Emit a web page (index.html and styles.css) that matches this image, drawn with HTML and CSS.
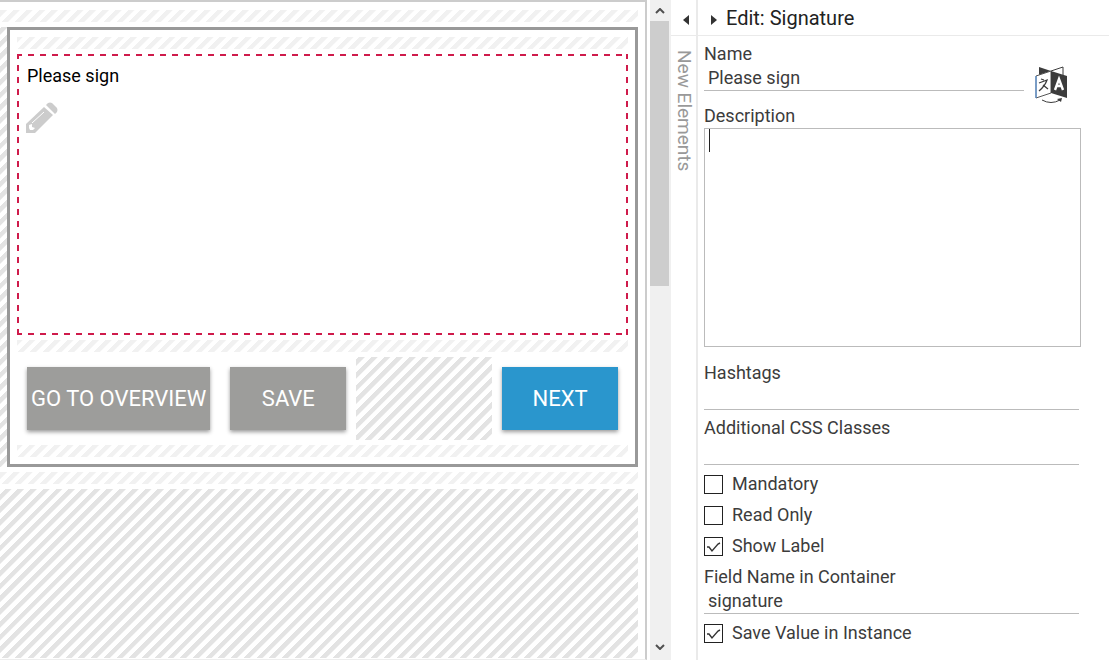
FILE: index.html
```
<!DOCTYPE html>
<html lang="en">
<head>
    <meta charset="UTF-8">
    <meta name="viewport" content="width=device-width, initial-scale=1.0">
    <title>Form Editor</title>
    <link rel="stylesheet" href="styles.css">
</head>
<body>
    <div class="editor">
        <main class="canvas">
            <div class="drop-line"></div>
            <div class="canvas-row">
                <div class="drop-side"></div>
                <section class="container">
                    <div class="drop-line"></div>
                    <div class="element selected">
                        <div class="element-label">Please sign</div>
                        <svg class="pencil" width="32" height="32" viewBox="0 0 32 32">
                            <path fill="#ccc" d="M0 31V22L18 5L27 13L9 31Z"/>
                            <path fill="#ccc" d="M20 3L22 1Q24 0 26 1L31 6Q32 8 31 10L29 12Z"/>
                            <path stroke="#fff" stroke-width="1" fill="none" d="M6 21L18 10"/>
                            <path fill="#fff" d="M3 23L6 22L6 25L9 26L7 28L4 28L3 26Z"/>
                        </svg>
                    </div>
                    <div class="drop-line"></div>
                    <div class="button-row">
                        <button class="btn">GO TO OVERVIEW</button>
                        <button class="btn">SAVE</button>
                        <div class="drop-cell"></div>
                        <button class="btn btn-next">NEXT</button>
                    </div>
                    <div class="drop-line"></div>
                </section>
            </div>
            <div class="drop-line"></div>
            <div class="drop-area"></div>
        </main>

        <div class="scrollbar">
            <button class="scroll-btn" aria-label="Scroll up">
                <svg width="10" height="6" viewBox="0 0 10 6"><path d="M1 5L5 1L9 5"/></svg>
            </button>
            <div class="scroll-thumb"></div>
            <button class="scroll-btn" aria-label="Scroll down">
                <svg width="10" height="6" viewBox="0 0 10 6"><path d="M1 1L5 5L9 1"/></svg>
            </button>
        </div>

        <aside class="new-elements">
            <button class="panel-toggle" aria-label="Show new elements">
                <svg width="6" height="10" viewBox="0 0 6 10"><path d="M6 0V10L0 5Z"/></svg>
            </button>
            <span class="side-title">New Elements</span>
        </aside>

        <aside class="edit-panel">
            <header class="panel-header">
                <button class="panel-toggle" aria-label="Hide edit panel">
                    <svg width="6" height="10" viewBox="0 0 6 10"><path d="M0 0V10L6 5Z"/></svg>
                </button>
                <h1>Edit: Signature</h1>
            </header>
            <form class="fields">
                <div class="name-row">
                    <div class="field">
                        <label for="name">Name</label>
                        <input type="text" id="name" value="Please sign">
                    </div>
                    <button type="button" class="translate" aria-label="Translate">
                        <svg width="34" height="38" viewBox="0 0 34 38">
                            <path fill="#3c3c3c" d="M4 1L16 5L4 9Z"/>
                            <path fill="#fff" stroke="#3c3c3c" d="M16 5L28 1V9"/>
                            <path fill="#fff" stroke="#555" d="M1 10L16 5V27L1 32Z"/>
                            <path fill="#3c3c3c" d="M16 5L32 10V32L16 27Z"/>
                            <path stroke="#4a90e2" d="M1 10V32"/>
                            <path stroke="#3c3c3c" fill="none" stroke-width="1.3" d="M6 13L9 14M4 17L12 14Q10 20 4 25M8 19L13 23"/>
                            <path stroke="#fff" fill="none" stroke-width="2.4" d="M20 24L24 13L28 24M21 20H27"/>
                            <path stroke="#3c3c3c" fill="none" d="M7 34Q16 39 25 34"/>
                            <path fill="#3c3c3c" d="M22 33L27 32L26 36Z"/>
                        </svg>
                    </button>
                </div>
                <div class="field description">
                    <label for="description">Description</label>
                    <div class="text-box">
                        <textarea id="description"></textarea>
                    </div>
                </div>
                <div class="field">
                    <label for="hashtags">Hashtags</label>
                    <input type="text" id="hashtags">
                </div>
                <div class="field">
                    <label for="css">Additional CSS Classes</label>
                    <input type="text" id="css">
                </div>
                <div class="checks">
                    <label class="check"><input type="checkbox">Mandatory</label>
                    <label class="check"><input type="checkbox">Read Only</label>
                    <label class="check"><input type="checkbox" checked>Show Label</label>
                </div>
                <div class="field">
                    <label for="fieldName">Field Name in Container</label>
                    <input type="text" id="fieldName" value="signature">
                </div>
                <div class="checks">
                    <label class="check"><input type="checkbox" checked>Save Value in Instance</label>
                </div>
            </form>
        </aside>
    </div>
</body>
</html>
```

FILE: styles.css
```
* {
    box-sizing: border-box;
}
body {
    margin: 0;
    font-family: Roboto, sans-serif;
    font-size: 18px;
    line-height: 24px;
    color: #3c3c3c;
    background: #fff;
}
button, input, textarea {
    font: inherit;
    color: inherit;
    border: none;
    border-radius: 0;
    background: none;
    padding: 0;
    margin: 0;
}
button {
    cursor: pointer;
}
svg {
    display: block;
}
.editor {
    display: flex;
    height: 100vh;
    overflow: hidden;
}

/* canvas */
.canvas {
    flex: 1;
    display: flex;
    flex-direction: column;
    gap: 5px;
    padding: 8px 7px 1px 0;
    border-top: 2px solid #ccc;
    border-right: 2px solid #ccc;
    border-bottom: 1px solid #eee;
}
.drop-line, .drop-side, .drop-cell, .drop-area {
    background: repeating-linear-gradient(-45deg, #fff, #fff 4px, #e3e3e3 5px, #e3e3e3 9px);
}
.drop-line {
    height: 12px;
    flex-shrink: 0;
    opacity: 0.5;
}
.canvas-row {
    display: flex;
}
.drop-side {
    width: 7px;
}
.container {
    flex: 1;
    display: flex;
    flex-direction: column;
    gap: 5px;
    padding: 7px;
    border: 3px solid #999;
}
.element {
    height: 281px;
    padding: 10px;
    color: #000;
}
.selected {
    --dash: #cf1b4b 50%, transparent 50%;
    background-image:
        linear-gradient(90deg, var(--dash)),
        linear-gradient(90deg, var(--dash)),
        linear-gradient(0deg, var(--dash)),
        linear-gradient(0deg, var(--dash));
    background-size: 12px 2px, 12px 2px, 2px 12px, 2px 12px;
    background-position: -1px 0, -1px 100%, 0 5px, 100% 5px;
    background-repeat: repeat-x, repeat-x, repeat-y, repeat-y;
}
.pencil {
    margin: 14px 0 0 -1px;
}
.button-row {
    display: grid;
    grid-template-columns: auto 1fr 1fr 1fr;
}
.btn {
    height: 63px;
    margin: 10px;
    padding: 0 4px;
    font-size: 22px;
    color: #fff;
    background: #9d9d9b;
    box-shadow: 0 2px 4px rgba(0, 0, 0, 0.4);
}
.btn-next {
    background: #2a96cd;
}
.drop-area {
    flex: 1;
}

/* scrollbar */
.scrollbar {
    display: flex;
    flex-direction: column;
    width: 21px;
    margin-left: 3px;
    padding: 0 2px 3px 0;
    background: #f0f0f0;
}
.scroll-btn {
    height: 21px;
    display: flex;
    align-items: center;
    justify-content: center;
}
.scroll-btn path {
    fill: none;
    stroke: #505050;
    stroke-width: 2;
}
.scroll-thumb {
    height: 265px;
    margin-bottom: auto;
    background: #cdcdcd;
}

/* collapsed panel */
.new-elements {
    width: 25px;
}
.panel-toggle {
    display: flex;
    align-items: center;
    justify-content: center;
}
.panel-toggle path {
    fill: #333;
}
.new-elements .panel-toggle {
    width: 100%;
    height: 36px;
    padding: 5px 0 0 5px;
    border-bottom: 1px solid #eaeaea;
}
.side-title {
    display: block;
    margin: 14px 0 0 1px;
    writing-mode: vertical-rl;
    font-size: 19px;
    color: #999;
}

/* edit panel */
.edit-panel {
    width: 413px;
    border-left: 2px solid #eaeaea;
}
.panel-header {
    display: flex;
    height: 36px;
    padding-left: 13px;
    gap: 9px;
    border-bottom: 1px solid #eaeaea;
}
.panel-header .panel-toggle {
    padding-top: 5px;
}
.panel-header h1 {
    margin: 0;
    font-size: 20px;
    font-weight: 400;
    line-height: 36px;
    color: #222;
}
.fields {
    padding: 6px 28px 0 6px;
}
.field {
    display: flex;
    flex-direction: column;
    margin: 0 2px 6px 0;
}
.field label {
    height: 24px;
}
.field input {
    height: 25px;
    padding: 0 4px 2px;
    border-bottom: 1px solid #bbb;
}
.name-row {
    display: flex;
    gap: 9px;
}
.name-row .field {
    flex: 1;
}
.translate {
    margin: 24px 12px 0 0;
}
.description {
    margin: 0 0 14px;
}
.text-box {
    position: relative;
}
.text-box textarea {
    display: block;
    width: 100%;
    height: 219px;
    padding: 0 4px;
    border: 1px solid #bbb;
    resize: none;
}
.text-box::before {
    content: "";
    position: absolute;
    top: 1px;
    left: 5px;
    width: 1px;
    height: 23px;
    background: #222;
}
.checks {
    margin: -3px 0 4px;
}
.check {
    display: flex;
    align-items: center;
    gap: 9px;
    height: 31px;
}
.check input {
    appearance: none;
    width: 19px;
    height: 19px;
    margin-top: 2px;
    border: 1px solid #222;
}
.check input:checked {
    background: url("data:image/svg+xml,%3Csvg xmlns='http://www.w3.org/2000/svg' viewBox='0 0 17 17'%3E%3Cpath d='M2 9l2 0l3 4l6-7l2-1' fill='none' stroke='%23333' stroke-width='1.4'/%3E%3C/svg%3E");
}
input:focus, textarea:focus {
    outline: none;
}
```
